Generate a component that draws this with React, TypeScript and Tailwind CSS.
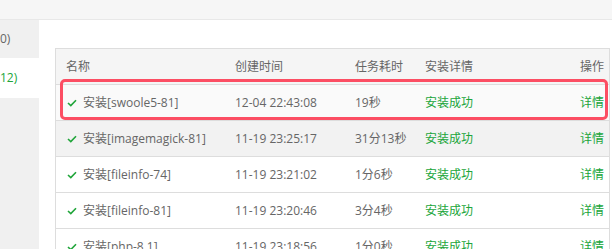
import React from "react";

const rows = [
  { name: "安装[swoole5-81]", time: "12-04 22:43:08", cost: "19秒", bg: "bg-[#fafafa]" },
  { name: "安装[imagemagick-81]", time: "11-19 23:25:17", cost: "31分13秒", bg: "bg-[#f2f2f2]" },
  { name: "安装[fileinfo-74]", time: "11-19 23:21:02", cost: "1分6秒", bg: "bg-white" },
  { name: "安装[fileinfo-81]", time: "11-19 23:20:46", cost: "3分4秒", bg: "bg-white" },
  { name: "安装[php-8.1]", time: "11-19 23:18:56", cost: "1分0秒", bg: "bg-white" },
];

function Check() {
  return (
    <svg width="10" height="8" viewBox="0 0 10 8" className="shrink-0">
      <polyline points="1,4 3.8,6.6 9,1.2" fill="none" stroke="#20a53a" strokeWidth="1.6" />
    </svg>
  );
}

export default function App() {
  return (
    <div
      className="relative w-[612px] h-[249px] overflow-hidden bg-white text-[12px] text-[#666]"
      style={{ fontFamily: '"Open Sans", "Noto Sans CJK SC", sans-serif' }}
    >
      <div className="h-[20px] bg-[#f6f6f6] border-b border-[#e8e8e8]" />
      <div className="flex h-[229px]">
        <div className="w-[39px] shrink-0 bg-[#f0f0f0]">
          <div className="h-[38px] flex items-center">0)</div>
          <div className="h-[40px] flex items-center bg-white text-[#20a53a]">12)</div>
        </div>
        <div className="flex-1 pl-[16px] pt-[28px]">
          <div className="w-[555px] border-l border-r border-t border-[#dddddd]">
            <div className="grid grid-cols-[169px_120px_70px_1fr_60px] h-[36px] items-center bg-[#f5f5f5] border-b border-[#dddddd]">
              <div className="pl-[10px]">名称</div>
              <div className="pl-[10px]">创建时间</div>
              <div className="pl-[10px]">任务耗时</div>
              <div className="pl-[10px]">安装详情</div>
              <div className="text-right pr-[5px]">操作</div>
            </div>
            {rows.map((r) => (
              <div
                key={r.name}
                className={`grid grid-cols-[169px_120px_70px_1fr_60px] h-[36px] items-center border-b border-[#dddddd] ${r.bg}`}
              >
                <div className="pl-[11px] flex items-center gap-[6px] whitespace-nowrap">
                  <Check />
                  <span>{r.name}</span>
                </div>
                <div className="pl-[10px] whitespace-nowrap">{r.time}</div>
                <div className="pl-[10px] whitespace-nowrap">{r.cost}</div>
                <div className="pl-[10px] text-[#20a53a]">安装成功</div>
                <div className="text-right pr-[5px] text-[#20a53a]">详情</div>
              </div>
            ))}
          </div>
        </div>
      </div>
      <div className="absolute left-[60px] top-[79px] w-[548px] h-[41px] border-[3px] border-[#fc4e63] rounded-[5px]" />
    </div>
  );
}
